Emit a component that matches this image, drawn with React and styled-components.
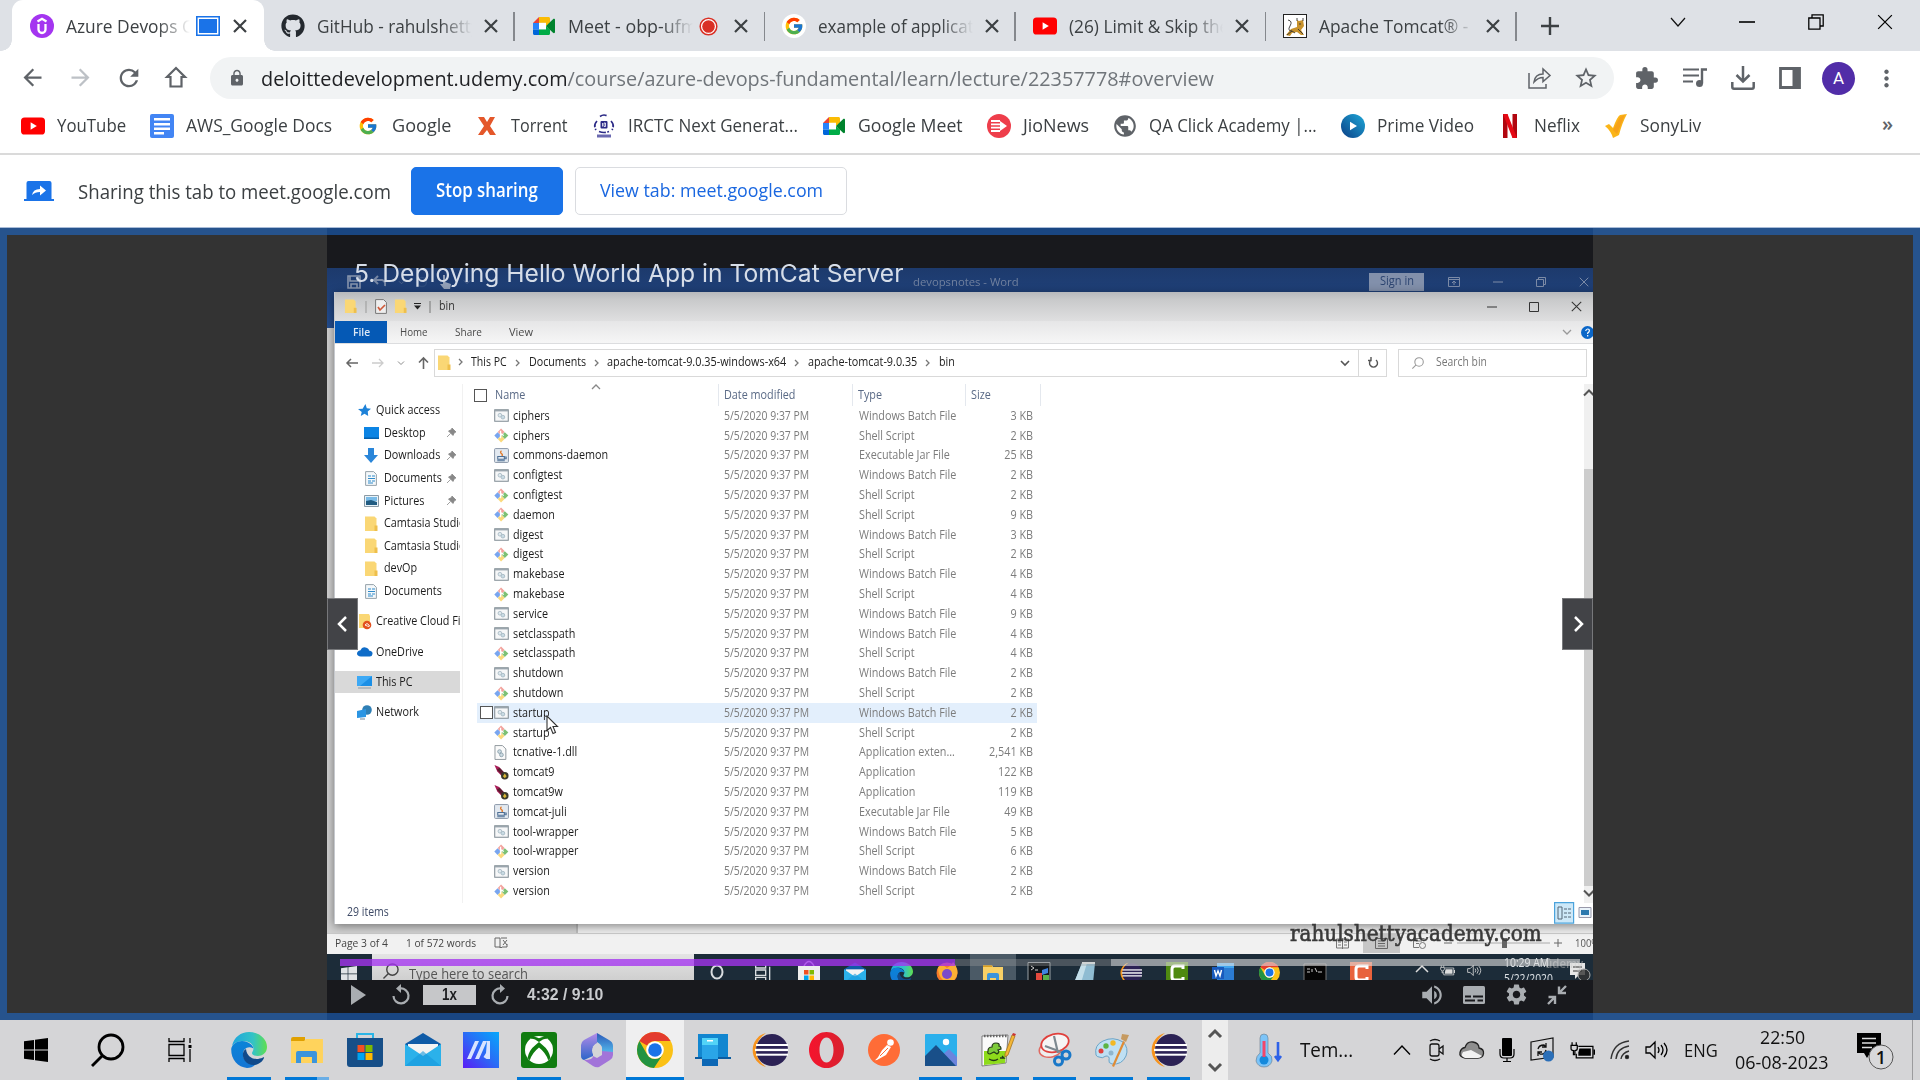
import React, { useLayoutEffect, useRef, useState } from "react";
import styled, { createGlobalStyle, css } from "styled-components";
import { FcGoogle } from "react-icons/fc";
import { FaGithub } from "react-icons/fa";
import {
  MdArrowBack, MdArrowForward, MdRefresh, MdLock, MdStarBorder, MdExtension,
  MdMoreVert, MdVolumeUp, MdSettings, MdPublic,
} from "react-icons/md";

const Global = createGlobalStyle`
  *, *::before, *::after { box-sizing: border-box; }
  html, body { margin: 0; padding: 0; }
  body { width: 1920px; height: 1080px; overflow: hidden; background: #fff; font-family: "Open Sans", "Noto Sans", sans-serif; }
  svg { display: block; flex: none; overflow: visible; }
`;

/* ---------- text that keeps a given measure ---------- */
const FitBox = styled.span`
  display: block;
  flex: none;
  width: ${(p) => (p.$w ? p.$w + "px" : "auto")};
  white-space: nowrap;
  font-size: ${(p) => p.$size}px;
  line-height: 1.36;
  color: ${(p) => p.$color || "#3c4043"};
  font-weight: ${(p) => p.$weight || 400};
  ${(p) => p.$family && css`font-family: ${p.$family};`}
`;
const FitInner = styled.span`
  display: inline-block;
  transform-origin: 0 50%;
`;
const Fit = ({ w, size = 20, color, weight, family, children }) => {
  const ref = useRef(null);
  const [k, setK] = useState(1);
  useLayoutEffect(() => {
    setK(w / ref.current.offsetWidth);
  }, [w]);
  return (
    <FitBox $w={w} $size={size} $color={color} $weight={weight} $family={family}>
      <FitInner ref={ref} style={{ transform: `scaleX(${k})` }}>{children}</FitInner>
    </FitBox>
  );
};
const Narrow = styled.span`
  display: block;
  white-space: nowrap;
  transform: scaleX(${(p) => p.$k || 0.9});
  transform-origin: ${(p) => (p.$right ? "100% 50%" : "0 50%")};
  text-align: ${(p) => (p.$right ? "right" : "left")};
  font-size: ${(p) => p.$size || 12}px;
  line-height: 18px;
  color: ${(p) => p.$color || "#1c1c1c"};
`;

/* ---------- shared drawings ---------- */
const YouTube = ({ s = 24 }) => (
  <svg width={s} height={s} viewBox="0 0 24 24"><rect y="3.5" width="24" height="17" rx="3.6" fill="#f00" /><path d="M9.600 8.300v7.400l6.200-3.700z" fill="#fff" /></svg>
);
const Meet = ({ s = 24 }) => (
  <svg width={s} height={s} viewBox="0 0 24 24">
    <path d="M1 9l6-6v6z" fill="#ea4335" /><path d="M7 3h9.500c.9 0 1.500.6 1.500 1.500V9l-4 3V8.800H7z" fill="#fbbc04" />
    <path d="M1 9h6v6.500H1z" fill="#2684fc" /><path d="M1 15.500h6V21H2.500C1.600 21 1 20.400 1 19.500z" fill="#0066da" />
    <path d="M7 15.300h7V12l4 3.500v4c0 .9-.6 1.500-1.500 1.500H7z" fill="#00ac47" /><path d="M14 12l7-6.800c.8-.7 2-.4 2 .7v12.200c0 1.100-1.200 1.400-2 .7z" fill="#00832d" />
    <path d="M7 9h7v6.300H7z" fill="#fff" />
  </svg>
);
const Folder = ({ s = 14 }) => (
  <svg width={s} height={s * 1.1} viewBox="0 0 14 15.400"><path d="M1 .5h9.500l2 2V15H1z" fill="#fad775" /><path d="M10.500 9.500h3V15h-3z" fill="#eebf4c" /></svg>
);
const EdgeIcon = ({ s = 36 }) => (
  <svg width={s} height={s} viewBox="0 0 36 36">
    <defs>
      <linearGradient id="eg1" x1="0" x2="1"><stop offset="0" stopColor="#1fa5dd" /><stop offset=".6" stopColor="#33c3c6" /><stop offset="1" stopColor="#5fdf4e" /></linearGradient>
      <linearGradient id="eg2" x1="0" y1="0" x2="0" y2="1"><stop offset="0" stopColor="#0a84d8" /><stop offset="1" stopColor="#1475d4" /></linearGradient>
    </defs>
    <path d="M1 14C3 5 10 0 18 0c10 0 18 7 18 15 0 6-5 9-9 9-4 0-6-1.500-6-3 0-1 1.500-2 1.500-4.500C22.500 12 18 9 12 9 7 9 3 11 1 14z" fill="url(#eg1)" />
    <path d="M.2 17C1 12 6 9 11 9c6 0 11 4 11.500 7.500C17 13 12 17 12 22c0 7 6 11 13 10-3 3-6 4-9 4C7 35 0 28 .2 17z" fill="url(#eg2)" />
    <path d="M15 17c-4 2-4 8-1 12 3 4 9 5 13 3 3-1.500 5-3.500 6-6 .3-.8-.3-1-1-.6C24 29 16 26 15 17z" fill="#114a8b" />
  </svg>
);
const ChromeIcon = ({ s = 36 }) => (
  <svg width={s} height={s} viewBox="0 0 36 36">
    <circle cx="18" cy="18" r="18" fill="#fbc116" />
    <path d="M18 0a18 18 0 0 1 15.600 9H18a9 9 0 0 0-8 4.500L2.400 9A18 18 0 0 1 18 0z" fill="#e33b2e" />
    <path d="M2.400 9A18 18 0 0 0 17 36l8.500-13A9 9 0 0 1 10 22.300z" fill="#229342" />
    <circle cx="18" cy="18" r="8.800" fill="#fff" /><circle cx="18" cy="18" r="6.800" fill="#1a73e8" />
  </svg>
);
const Eclipse = ({ s = 36 }) => (
  <svg width={s} height={s} viewBox="0 0 36 36">
    <path d="M14 1A17.500 17.500 0 0 0 14 35C7 30 4 24 4 18S7 6 14 1z" fill="#f7941e" />
    <circle cx="20" cy="18" r="16" fill="#2c2255" />
    <g fill="#fff"><rect x="4" y="12" width="32" height="2" /><rect x="3" y="16.800" width="33" height="2.300" /><rect x="4" y="21.700" width="32" height="2" /></g>
  </svg>
);
const MailIcon = ({ s = 36 }) => (
  <svg width={s} height={s} viewBox="0 0 36 36"><path d="M0 12L18 1l18 11v4H0z" fill="#0f5ba7" /><path d="M3 12h30v12H3z" fill="#f3f3f3" /><path d="M0 12l18 12L36 12v22H0z" fill="#2bb1ea" /><path d="M0 34l18-15 18 15z" fill="#1597dc" opacity=".6" /></svg>
);
const StoreIcon = ({ s = 36 }) => (
  <svg width={s} height={s} viewBox="0 0 36 36">
    <path d="M10 8V2h16v6" fill="none" stroke="#2ab5e6" strokeWidth="2" /><path d="M0 6h36v26a3 3 0 0 1-3 3H3a3 3 0 0 1-3-3z" fill="#174f88" />
    <path d="M10.500 13h7v7h-7z" fill="#f25022" /><path d="M18.500 13h7v7h-7z" fill="#7fba00" /><path d="M10.500 21h7v7h-7z" fill="#00a4ef" /><path d="M18.500 21h7v7h-7z" fill="#ffb900" />
  </svg>
);
const WinLogo = ({ s = 24, color = "#000" }) => (
  <svg width={s} height={s} viewBox="0 0 24 24"><path d="M0 3.200l10-1.300v9.500H0zM11 1.700L24 0v11.400H11zM0 12.500h10v9.600L0 20.800zM11 12.500h13V24l-13-1.700z" fill={color} /></svg>
);
const TaskView = ({ s = 24, color = "#000" }) => (
  <svg width={s} height={s} viewBox="0 0 24 24" fill="none" stroke={color} strokeWidth="1.300"><path d="M1 0v3.500h15V0M1 24v-3.500h15V24M1 6.500h15v11H1zM22 0v5M22 11v13" /><path d="M20.500 7h3v3h-3z" fill={color} stroke="none" /></svg>
);
const Speaker = ({ s = 24, color = "#000" }) => (
  <svg width={s} height={s} viewBox="0 0 24 24" fill="none" stroke={color} strokeWidth="1.300"><path d="M1 9h4l5-5v16l-5-5H1zM13 9q2 3 0 6M16 7q4 5 0 10M19 5q6 7 0 14" /></svg>
);
const Battery = ({ s = 24, color = "#000" }) => (
  <svg width={s} height={s} viewBox="0 0 24 24"><path d="M8 8h14v11H6v-4" fill="none" stroke={color} strokeWidth="1.200" /><path d="M9 10h11v7H8v-3z" fill={color} /><path d="M22.500 11h1.500v5h-1.500z" fill={color} /><path d="M1 7h6v3q0 2-2.300 2V16H3.300v-4Q1 12 1 10zM2 4v3M6 4v3" fill="none" stroke={color} strokeWidth="1.200" /></svg>
);
const CloseX = ({ s = 14, color = "#3c4043", t = 2.200 }) => (
  <svg width={s} height={s} viewBox="0 0 14 14"><path d="M1 1l12 12M13 1L1 13" stroke={color} strokeWidth={t} /></svg>
);

/* ---------- tab strip ---------- */
const TabStrip = styled.header`
  display: flex;
  height: 51px;
  padding-left: 12px;
  background: #dee1e6;
`;
const TabBox = styled.div`
  position: relative;
  display: flex;
  align-items: center;
  width: ${(p) => (p.$active ? 252 : 250.500)}px;
  padding: 1px 17px 0 ${(p) => (p.$active ? 18 : 17)}px;
  gap: 12px;
  ${(p) => p.$active
    ? css`
      background: #fff;
      border-radius: 11px 11px 0 0;
      &::before, &::after { content: ""; position: absolute; bottom: 0; width: 11px; height: 11px; }
      &::before { left: -11px; background: radial-gradient(circle at 0 0, transparent 10.500px, #fff 11px); }
      &::after { right: -11px; background: radial-gradient(circle at 100% 0, transparent 10.500px, #fff 11px); }`
    : css`
      &::after { content: ""; position: absolute; right: 0; top: 12px; width: 1.500px; height: 29px; background: #85888d; }`}
`;
const TabTitle = styled.div`
  flex: 1;
  min-width: 0;
  margin-right: ${(p) => (p.$badge ? -6 : 0)}px;
  padding-top: 2px;
  overflow: hidden;
  mask-image: linear-gradient(90deg, #000 calc(100% - 32px), transparent);
`;
const Badge = styled.span`
  flex: none;
  margin-right: ${(p) => p.$mr}px;
`;
const NewTab = styled.div`
  display: flex;
  align-items: center;
  padding: 1px 0 0 24px;
`;
const WindowKeys = styled.div`
  display: flex;
  align-items: center;
  gap: 53px;
  height: 43px;
  margin-left: auto;
  padding-right: 27px;
`;
const Udemy = () => (
  <svg width="24" height="24" viewBox="0 0 24 24"><circle cx="12" cy="12" r="12" fill="#a435f0" /><path d="M7.500 7.500L12 4.800l4.500 2.700M8.500 10v5.500a3.500 3.500 0 0 0 7 0V10" fill="none" stroke="#fff" strokeWidth="2.300" /></svg>
);
const Tomcat = () => (
  <svg width="24" height="24" viewBox="0 0 24 24"><rect x=".5" y=".5" width="23" height="23" fill="#fff" stroke="#222" /><path d="M3 21l5-6 6-2 0-7 2 1 4-1 1 6-3 4 3 5h-3l-4-3-5 1-2 3z" fill="#c8922c" /><path d="M5 6q5 1 2 6t2 5M14 4v3M20 4v3M16 10h2M4 21l5-4 3 2M15 15l5 5" fill="none" stroke="#333" strokeWidth=".9" /></svg>
);
const GoogleDisc = styled.span`
  display: flex; align-items: center; justify-content: center; flex: none;
  width: 24px; height: 24px; border-radius: 50%; background: #fff;
`;
const tabs = [
  { icon: <Udemy />, title: "Azure Devops Co", w: 137, active: true, mr: 2,
    badge: <svg width="24" height="20" viewBox="0 0 24 20"><path d="M.8.8h22.400v18.400H.8z" fill="#fff" stroke="#1a73e8" strokeWidth="1.600" /><path d="M3 3h18v14H3z" fill="#1a73e8" /></svg> },
  { icon: <FaGithub size={24} color="#24292f" />, title: "GitHub - rahulshetty", w: 163 },
  { icon: <Meet />, title: "Meet - obp-ufmx", w: 139, mr: 5,
    badge: <svg width="19" height="19" viewBox="0 0 19 19"><circle cx="9.500" cy="9.500" r="8.300" fill="#fff" stroke="#d93025" strokeWidth="1.500" /><circle cx="9.500" cy="9.500" r="6.300" fill="#d93025" /></svg> },
  { icon: <GoogleDisc><FcGoogle size={20} /></GoogleDisc>, title: "example of applicati", w: 160 },
  { icon: <YouTube />, title: "(26) Limit & Skip the", w: 160 },
  { icon: <Tomcat />, title: "Apache Tomcat® -", w: 149 },
];

/* ---------- address bar ---------- */
const Toolbar = styled.div`
  display: flex;
  align-items: center;
  height: 54px;
  padding-left: 19px;
`;
const NavKeys = styled.div`
  display: flex;
  gap: 21px;
  width: 191px;
`;
const Omnibox = styled.div`
  display: flex;
  align-items: center;
  width: 1404px;
  height: 42px;
  padding: 0 15px 0 18px;
  border-radius: 21px;
  background: #f1f3f4;
`;
const UrlWrap = styled.div`
  flex: 1;
  padding: 1.500px 0 0 15px;
  span b { font-weight: 400; color: #202124; }
`;
const OmniKeys = styled.div`
  display: flex;
  align-items: center;
  gap: 22px;
`;
const Extras = styled.div`
  display: flex;
  align-items: center;
  gap: 24px;
  padding-left: 20px;
`;
const Avatar = styled.div`
  display: flex; align-items: center; justify-content: center;
  width: 33px; height: 33px; margin-left: -3px; margin-right: -6px;
  border-radius: 50%;
  background: #512da8;
  color: #fff;
  font: 400 17px Roboto, sans-serif;
`;

/* ---------- bookmarks ---------- */
const Bookmarks = styled.nav`
  display: flex;
  align-items: center;
  gap: 24px;
  height: 50px;
  padding: 0 27px 6px 21px;
  border-bottom: 2px solid #dadada;
`;
const Bookmark = styled.div`
  display: flex;
  align-items: center;
  gap: 12px;
`;
const Slot = styled.span`
  display: flex; align-items: center; justify-content: center;
  width: 24px; height: 24px; flex: none;
`;
const More = styled.span`
  margin-left: auto;
  margin-top: -4px;
  font-size: 20px;
  font-weight: 600;
  line-height: 24px;
  color: #5f6368;
`;
const bookmarks = [
  [<YouTube />, "YouTube", 69],
  [<svg width="24" height="24" viewBox="0 0 24 24"><rect width="24" height="24" rx="2" fill="#4285f4" /><path d="M4 4h16v2.500H4zM4 9h16v2.500H4zM4 13.500h16V16H4zM4 18h10v2.500H4z" fill="#fff" /></svg>, "AWS_Google Docs", 146],
  [<FcGoogle size={20} />, "Google", 59],
  [<svg width="18" height="18" viewBox="0 0 18 18"><path d="M0 0h6l3 5 3-5h5l-5 9 6 9h-6l-3-5-4 5H0l6-9z" fill="#e4572a" /></svg>, "Torrent", 57],
  [<svg width="22" height="24" viewBox="0 0 22 24"><path d="M7 2.500q4-3 8 0M4 7q-4 4-1 9M18 7q4 4 1 9M6 17.500q5 2 10 0" fill="none" stroke="#2b2a86" strokeWidth="1.700" strokeDasharray="7 1.500" /><rect x="7.500" y="7" width="7" height="7.500" rx="1" fill="#2b2a86" /><path d="M9.500 9v3.500M11 9h1.500v3.500H11z" fill="none" stroke="#fff" strokeWidth=".8" /><path d="M4 20.500h14v3H4z" fill="#6a69b0" /></svg>, "IRCTC Next Generat...", 170],
  [<Meet />, "Google Meet", 105],
  [<svg width="24" height="24" viewBox="0 0 24 24"><circle cx="12" cy="12" r="12" fill="#ee3e4b" /><path d="M4 7h9M4 10.300h9M4 13.600h9M4 17h9" stroke="#fff" strokeWidth="1.800" /><path d="M13 7l7 5-7 5z" fill="#fff" /></svg>, "JioNews", 66],
  [<MdPublic size={26} color="#5f6368" />, "QA Click Academy |...", 168],
  [<svg width="24" height="24" viewBox="0 0 24 24"><defs><linearGradient id="pv" x1="1" y1="0" x2="0" y2="1"><stop stopColor="#1ea8d8" /><stop offset="1" stopColor="#0b3f86" /></linearGradient></defs><circle cx="12" cy="12" r="12" fill="url(#pv)" /><path d="M9 7.800v8.400l7-4.200z" fill="#fff" /></svg>, "Prime Video", 97],
  [<svg width="14" height="24" viewBox="0 0 14 24"><path d="M0 0h4.500v24H0zM9.500 0H14v24H9.500z" fill="#b1060f" /><path d="M0 0h4.500L14 24H9.500z" fill="#e50914" /></svg>, "Neflix", 46],
  [<svg width="22" height="24" viewBox="0 0 22 24"><path d="M0 12l4-2 4 4Q12 3 15 1l7-1q-5 9-8 21l-6 3q-2-7-8-12z" fill="#fbb518" /><path d="M8 16L15 3l5-2.500L12 20z" fill="#f28f1c" opacity=".5" /></svg>, "SonyLiv", 61],
];

/* ---------- sharing bar ---------- */
const ShareBar = styled.div`
  display: flex;
  align-items: center;
  height: 73px;
  padding: 0 24px 0;
  border-bottom: 1px solid #a9bcd8;
`;
const ShareLabel = styled.div`
  padding: 2px 20px 0 24px;
`;
const ShareButton = styled.button`
  display: flex; align-items: center; justify-content: center;
  width: ${(p) => p.$w}px;
  height: 48px;
  margin-right: 12px;
  padding: 0;
  border-radius: 5px;
  border: 1px solid ${(p) => (p.$primary ? "#1a73e8" : "#dadce0")};
  background: ${(p) => (p.$primary ? "#1a73e8" : "#fff")};
  font-family: inherit;
`;

/* ---------- page ---------- */
const Page = styled.main`
  position: relative;
  display: flex;
  justify-content: center;
  height: 792px;
  background: #333;
  &::after { content: ""; position: absolute; inset: 0; border: 7px solid rgba(26, 115, 232, 0.5); z-index: 5; }
`;
const Player = styled.section`
  position: relative;
  width: 1266px;
  padding: 7px 0;
  background: #18191d;
  overflow: hidden;
`;
const Footage = styled.div`
  position: relative;
  display: flex;
  flex-direction: column;
  height: 745px;
  padding-top: 33px;
  overflow: hidden;
`;
const WordBar = styled.div`
  display: flex;
  align-items: center;
  height: 60px;
  padding: 0 4px 32px 20px;
  background: linear-gradient(#1d3a6c, #1f4078 24px, #234d8f);
`;
const WordTools = styled.div`
  display: flex; align-items: center; gap: 12px; width: 566px;
`;
const WordKeys = styled.div`
  display: flex; align-items: center; gap: 33px; margin-left: auto;
`;
const SignIn = styled.div`
  display: flex; justify-content: center;
  width: 55px; height: 18px; margin-right: -9px;
  background: #8290ab;
`;
const WordCanvas = styled.div`
  flex: 1;
  background: linear-gradient(90deg, #d0d0d0 0 249px, #bbb 249px 251px, #ededed 251px);
  border-bottom: 1px solid #c9c9c9;
`;
const WordStatus = styled.div`
  display: flex;
  align-items: center;
  gap: 18px;
  height: 20px;
  padding: 0 0 2px 8px;
  background: #f1f1f1;
`;
const WordZoom = styled.div`
  display: flex; align-items: center; gap: 18px; margin-left: auto;
  width: 257px;
  overflow: hidden;
`;
const ViewTile = styled.span`
  display: flex; justify-content: center; align-items: center; flex: none;
  width: 37px; height: 19px; margin: 0 -5.500px 0 -4px; background: #c6c6c6;
`;
const Percent = styled.span`
  margin-left: -7px;
`;
const InnerBar = styled.div`
  display: flex;
  align-items: flex-start;
  height: 26px;
  padding-left: 14px;
  background: #1c2c39;
  overflow: hidden;
`;
const InnerSearch = styled.div`
  display: flex;
  align-items: flex-start;
  gap: 10px;
  width: 322px;
  height: 26px;
  padding: 9px 0 0 11px;
  background: linear-gradient(#e4e4e4, #cfcfcf);
`;
const InnerStart = styled.div`
  width: 31px; padding-top: 12px;
`;
const InnerIcon = styled.div`
  display: flex; justify-content: center;
  width: 46px; height: 26px; padding-top: 8px;
  background: ${(p) => (p.$on ? "#4b5a66" : "transparent")};
`;
const InnerTray = styled.div`
  display: flex; gap: 12px; padding: 9px 0 0 32px;
`;
const InnerClock = styled.div`
  width: 64px; padding: 0 0 0 10px; margin-top: -8px;
`;
const Watermark = styled.div`
  position: absolute;
  left: 963px; top: 684px;
  -webkit-text-stroke: 0.600px #3a3a3a;
`;
const FaintBrand = styled.div`
  position: absolute;
  right: 10px; top: 720px;
  opacity: 0.5;
`;

/* explorer window */
const Explorer = styled.div`
  position: absolute;
  left: 7px; top: 57px;
  display: flex;
  flex-direction: column;
  width: 1275px; height: 632px;
  background: #fff;
  border-left: 1px solid #c6c9ce;
  box-shadow: 0 2px 9px rgba(0, 0, 0, 0.45);
`;
const ExpTitle = styled.div`
  display: flex;
  align-items: center;
  gap: 7px;
  height: 29px;
  padding: 0 27px 0 9px;
  background: linear-gradient(#b7b9bc, #c9cacb 8px, #dfdfe0);
`;
const ExpKeys = styled.div`
  display: flex; align-items: center; gap: 32px; margin-left: auto;
`;
const Ribbon = styled.div`
  display: flex;
  align-items: center;
  gap: 27px;
  height: 23px;
  padding-right: 15px;
  background: linear-gradient(#e6e6e7, #f6f6f6);
  border-bottom: 1px solid #dcdddf;
`;
const FileTab = styled.div`
  display: flex; justify-content: center; align-items: center;
  width: 52px; height: 22px; margin-right: -14px;
  background: #0559b5;
`;
const RibbonEnd = styled.div`
  display: flex; align-items: center; gap: 10px; margin-left: auto;
`;
const PathRow = styled.div`
  display: flex;
  align-items: center;
  height: 40px;
  padding: 0 0 3px 11px;
`;
const PathKeys = styled.div`
  display: flex; align-items: center; gap: 14px; width: 88px;
`;
const PathBox = styled.div`
  display: flex; align-items: center;
  width: 953px; height: 28px; padding-left: 2px;
  border: 1px solid #d9d9d9;
`;
const Crumb = styled.div`
  display: flex; align-items: center;
  padding-right: ${(p) => (p.$first ? 6 : 6.700)}px; gap: ${(p) => (p.$first ? 6 : 7)}px;
`;
const PathEnd = styled.div`
  display: flex; align-items: center; height: 26px; margin-left: auto;
`;
const Reload = styled.span`
  display: flex; align-items: center; justify-content: center;
  width: 28px; height: 26px; margin-left: 9px; border-left: 1px solid #d9d9d9;
`;
const SearchBox = styled.div`
  display: flex; align-items: center; gap: 12px;
  width: 189px; height: 28px; margin-left: 11px; padding-left: 13px;
  border: 1px solid #d9d9d9;
`;
const ExpBody = styled.div`
  display: flex;
  height: 519px;
`;
const Tree = styled.div`
  width: 128px;
  padding-top: 15px;
  border-right: 1px solid #f1f1f1;
`;
const TreeItem = styled.div`
  display: flex;
  align-items: center;
  gap: ${(p) => (p.$deep ? 5 : 4)}px;
  width: 125px;
  height: 22.600px;
  margin-top: ${(p) => p.$top || 0}px;
  padding-left: ${(p) => (p.$deep ? 28.500 : 22)}px;
  background: ${(p) => (p.$on ? "#d9d9d9" : "transparent")};
  overflow: hidden;
`;
const TreeIcon = styled.span`
  display: flex; justify-content: center; width: 15px; flex: none;
`;
const TreeName = styled(Narrow)`
  flex: 1;
  width: 0;
`;
const Pin = styled.span`
  flex: none; padding-right: 4px;
`;
const Files = styled.div`
  position: relative;
  flex: 1;
`;
const SortMark = styled.span`
  position: absolute;
  left: 129px; top: -1px;
`;
const FilesHead = styled.div`
  display: grid;
  grid-template-columns: 21px 223px 6px 128px 6px 107px 6px 69px 1px;
  align-items: center;
  height: 22px;
  padding: 0 0 0 11px;
`;
const Rule = styled.i`
  width: 1px; height: 22px; background: #e4e8ee;
`;
const FileRow = styled.div`
  display: grid;
  grid-template-columns: 17px 19px 211px 134.500px 112.500px 62px;
  align-items: center;
  width: 560px;
  height: 19.800px;
  margin-left: 14px;
  background: ${(p) => (p.$on ? "#e3effc" : "transparent")};
`;
const Check = styled.i`
  display: block;
  width: 13px; height: 13px; margin-left: ${(p) => p.$ml || 0}px;
  border: 1.500px solid #555; background: #fff;
`;
const Scroll = styled.div`
  display: flex; flex-direction: column;
  width: 25px; padding-top: 4px;
  background: #f0f0f0;
`;
const Thumb = styled.div`
  height: 417px; margin-top: 71px; margin-bottom: 2px; background: #cdcdcd;
`;
const ExpStatus = styled.div`
  display: flex; align-items: center; justify-content: space-between;
  height: 21px; padding: 0 17px 2px 12px;
`;
const Cursor = styled.span`
  position: absolute;
  left: 219px; top: 480px;
`;

/* player overlay */
const LectureTitle = styled.h1`
  position: absolute;
  left: 27px; top: 29px;
  margin: 0;
`;
const Skip = styled.div`
  position: absolute;
  ${(p) => p.$side}: 0;
  top: 370px;
  display: flex; align-items: center; justify-content: center;
  width: 31px; height: 52px;
  background: #424347;
  border: 1px solid #77787b;
`;
const Progress = styled.div`
  position: absolute;
  left: 13px; top: 731px;
  display: flex;
  width: 1240px; height: 7px;
`;
const Span = styled.i`
  width: ${(p) => p.$w}px; background: ${(p) => p.$c};
`;
const Controls = styled.div`
  display: flex;
  align-items: center;
  height: 33px;
  padding: 0 26px 4px 24px;
`;
const Back5 = styled.span`
  margin-left: 26px;
`;
const Rate = styled.div`
  display: flex; justify-content: center; align-items: center;
  width: 53px; height: 20px; margin: 0 15px 0 13px;
  background: #c6c7c9;
`;
const Elapsed = styled.div`
  margin-left: 18px;
`;
const ControlEnd = styled.div`
  display: flex; align-items: center; gap: 18.500px; margin-left: auto;
`;

/* ---------- task bar ---------- */
const TaskBar = styled.footer`
  display: flex;
  height: 60px;
  background: #d5d5d7;
`;
const StartArea = styled.div`
  display: flex; align-items: center; width: 220px; padding-left: 24px; gap: 43px;
`;
const AppTile = styled.div`
  position: relative;
  display: flex; align-items: center; justify-content: center;
  width: ${(p) => p.$w}px; height: 60px;
  background: ${(p) => (p.$state === "active" ? "#efeff0" : "transparent")};
  ${(p) => p.$state && css`
    &::after {
      content: ""; position: absolute; bottom: 0; height: 3px;
      left: ${p.$state === "active" ? 0 : 7}px; right: ${p.$state === "active" ? 0 : 7}px;
      background: ${p.$state === "multi" ? "linear-gradient(90deg, #0078d7 73%, #6aaee6 73%)" : "#0078d7"};
    }`}
`;
const Scroller = styled.div`
  display: flex; flex-direction: column; align-items: center; justify-content: space-between;
  width: 26px; margin-left: 5px; padding: 8px 0 7px;
  background: #ededed;
`;
const Weather = styled.div`
  display: flex; align-items: center; gap: 19px; width: 165px; padding-left: 28px;
`;
const Tray = styled.div`
  display: flex; align-items: center; gap: 15px;
`;
const Clock = styled.div`
  display: flex; flex-direction: column; align-items: center;
  width: 94px; margin-left: 17px; padding-top: 4px;
`;
const Notice = styled.div`
  display: flex; align-items: center; padding-left: 28px;
`;
const Sliver = styled.i`
  width: 1px; margin-left: 18px; background: #9b9b9d;
`;

const Fold = ({ s = 32 }) => <svg width={s} height={s * 0.810} viewBox="0 0 32 26"><path d="M0 2q0-2 2-2h12v5H0z" fill="#e0a000" /><path d="M0 4h13l2-2h17v24H0z" fill="#ffd35c" /><path d="M5 26V16q0-2 2-2h17q2 0 2 2v10h-5v-6H10v6z" fill="#3b94dc" /></svg>;
const MA = () => <svg width="36" height="36" viewBox="0 0 36 36"><defs><linearGradient id="ma" x1="0" y1="1" x2="1" y2="0"><stop stopColor="#5a1cf5" /><stop offset=".5" stopColor="#2b6bf6" /><stop offset="1" stopColor="#05a8fb" /></linearGradient></defs><path d="M0 0h36v36H0z" fill="url(#ma)" /><path d="M4 27L12 9h4L8 27zM12 27L20 9h4l-8 18zM23 21l1-12h3v18h-3.500l-3-2z" fill="#d8e4ff" /></svg>;
const Xbox = () => <svg width="36" height="36" viewBox="0 0 36 36"><rect width="36" height="36" rx="3" fill="#107c10" /><circle cx="18" cy="18" r="14" fill="#fff" /><path d="M10 6.500q3-.5 8 3 5-3.500 8-3l-1.500-2q-2-1.500-6.500 1-4.500-2.500-6.500-1zM9 28Q10 19 18 13q8 6 9 15l2 2-11-9-11 9zM8 8.500q2 0 5.500 4Q8 19 7 26q-2 0-3-4Q9 15 8 8.500zM28 8.500q-2 0-5.500 4Q28 19 29 26q2 0 3-4-5-7-4-13.500z" fill="#107c10" opacity="0" /><path d="M9.500 6.800Q13 6 18 10q5-4 8.500-3.200L25 5q-3-1-7 1.200Q14 4 11 5zM14.500 13Q8 18 6.500 26l2.300 2.300Q11 21 18 15.500 25 21 27.200 28.300l2.300-2.300Q28 18 21.500 13L18 10z" fill="#107c10" /></svg>;
const M365 = () => <svg width="32" height="36" viewBox="0 0 32 36"><defs><linearGradient id="m3" x1="0" y1="0" x2="0" y2="1"><stop stopColor="#b48be8" /><stop offset="1" stopColor="#2c66c9" /></linearGradient><linearGradient id="m4" x1="0" y1="0" x2="0" y2="1"><stop stopColor="#2b59b8" /><stop offset="1" stopColor="#58c3f0" /></linearGradient></defs><path d="M16 1L3 8Q0 10 0 13v11q0 3 3 4l9-4V16q0-3 4-5z" fill="url(#m3)" /><path d="M16 1l12 7q4 2 4 6v9l-11-3v-4q0-3-5-6z" fill="url(#m4)" /><path d="M32 20v3q0 3-3 5l-11 7q-3 1-6-1L3 28q9 0 9-4l4 2 5-3v-4z" fill="#a274d9" /><ellipse cx="16" cy="18.500" rx="5" ry="6" fill="#d5d5d7" /></svg>;
const Phone = () => <svg width="36" height="34" viewBox="0 0 36 34"><path d="M3 1h30v24H3z" fill="#1286d0" /><path d="M0 24h36v2H0z" fill="#0c5ca0" /><path d="M7 5h16v28H7z" fill="#2aa5e8" /><path d="M7 5h16v7H7z" fill="#53d3f7" /><path d="M7 26h16v7H7z" fill="#0c67b5" /><path d="M12 7h6v1.500h-6z" fill="#fff" /></svg>;
const Opera = () => <svg width="35" height="36" viewBox="0 0 35 36"><defs><linearGradient id="op" x1="0" x2="1"><stop stopColor="#f5142d" /><stop offset="1" stopColor="#d8222f" /></linearGradient></defs><path fillRule="evenodd" d="M17.500 0a17.500 18 0 1 0 .01 0zM17.500 5.500c4.500 0 7 6 7 12.500s-2.500 12.500-7 12.500-7-6-7-12.500 2.500-12.500 7-12.500z" fill="url(#op)" /></svg>;
const Postman = () => <svg width="32" height="32" viewBox="0 0 32 32"><circle cx="16" cy="16" r="16" fill="#ff6c37" /><circle cx="22.500" cy="8.500" r="3.300" fill="#fff" /><path d="M19 11l4 2-5 8-9 5-2 .3 3-3 4-7z" fill="#fff" /><path d="M12 22l8-8" stroke="#ff6c37" strokeWidth="1" /></svg>;
const Photos = ({ s = 32 }) => <svg width={s} height={s} viewBox="0 0 32 32"><rect width="32" height="32" rx="1" fill="#2bb0ec" /><path d="M16 22l8-7 8 8v9H16z" fill="#6b84dd" /><path d="M0 22L11 11l20 21H0z" fill="#194f89" /><circle cx="21" cy="8" r="3.200" fill="#fff" /></svg>;
const Npp = () => <svg width="34" height="34" viewBox="0 0 34 34"><path d="M1 3l26-1-2 28-24 3z" fill="#fafafa" stroke="#666" strokeWidth=".8" /><path d="M3 18h22l-1 12-21 2z" fill="#8edb1b" /><path d="M3 3h23" stroke="#666" strokeWidth="2.500" strokeDasharray="1.500 1.500" /><path d="M7 18q0-4 4-4 0-4 4-4t3 3q2 0 2 3l-3 1q2 2-1 4l-3-2-4 2q-3 0-2-3z" fill="#7ecb3a" stroke="#24391a" strokeWidth="1.200" /><path d="M8 26q5 3 9 0M19 25h4l-2-2" fill="none" stroke="#24391a" strokeWidth="1.300" /><path d="M24 21L31 2l3 1-7 19-3 2z" fill="#f3b637" stroke="#9c6b15" strokeWidth=".7" /><path d="M31 2l1-2 3 1-1 2z" fill="#c33" /></svg>;
const Snip = () => <svg width="34" height="34" viewBox="0 0 34 34"><ellipse cx="13" cy="16" rx="12" ry="8" transform="rotate(-15 13 16)" fill="#eee" stroke="#e06a62" strokeWidth="1.500" /><ellipse cx="17" cy="10" rx="14" ry="9" transform="rotate(-15 17 10)" fill="#f6f4f4" stroke="#e0403c" strokeWidth="1.800" /><path d="M16 3l4 17M7 13l19 7" stroke="#7d8890" strokeWidth="2.200" /><circle cx="28" cy="22" r="4" fill="none" stroke="#1a78c8" strokeWidth="3" /><circle cx="20.500" cy="28" r="4" fill="none" stroke="#1a78c8" strokeWidth="3" /></svg>;
const Paint = () => <svg width="34" height="34" viewBox="0 0 34 34"><path d="M1 22Q-1 12 8 8q10-5 20 1 6 6 3 14-4 9-14 8-4-1-3-4 1-4-3-4-4 3-7 1-2 0-3-2z" fill="#bfe0f3" stroke="#6ba4c7" /><circle cx="6" cy="18" r="2.500" fill="#e0413b" /><circle cx="11" cy="13" r="2.700" fill="#5bb443" /><circle cx="18" cy="10" r="2.700" fill="#f3b824" /><circle cx="16" cy="20" r="2.500" fill="#8fb6cd" /><path d="M17 33L28 8l2 1-11 25z" fill="#e08b35" /><path d="M26 6l1-5 7 1-3 7z" fill="#c69a60" /></svg>;
const apps = [
  [<EdgeIcon />, 58, "on"], [<Fold />, 58, "multi"], [<StoreIcon />, 58], [<MailIcon />, 58], [<MA />, 58], [<Xbox />, 58, "on"], [<M365 />, 58],
  [<ChromeIcon />, 58, "active"], [<Phone />, 57], [<Eclipse />, 57], [<Opera />, 57], [<Postman />, 57],
  [<Photos />, 57, "on"], [<Npp />, 57, "on"], [<Snip />, 57, "on"], [<Paint />, 57, "on"], [<Eclipse />, 57, "on"],
];

/* ---------- explorer drawings ---------- */
const fileIcons = {
  bat: <svg width="15" height="13" viewBox="0 0 16 14"><path d="M.7.7h14.600v12.600H.7z" fill="#f6f7f8" stroke="#7f8b93" strokeWidth="1.100" /><path d="M1 1h14v1.600H1z" fill="#9aa5ad" /><circle cx="6.300" cy="6.700" r="2" fill="#dfe9ee" stroke="#9fb2bd" strokeWidth=".8" /><circle cx="9.500" cy="8.800" r="2" fill="#c9dbe4" stroke="#9fb2bd" strokeWidth=".8" /></svg>,
  sh: <svg width="15" height="15" viewBox="0 0 16 16"><path d="M7.500.5l3.800 3.700-3.800 3.600-3.500-3.600z" fill="#f2a29c" /><path d="M3.800 4.400l3.700 3.600-3.700 3.700L.3 8z" fill="#78a5ef" /><path d="M11.500 4.400L15.300 8l-3.800 3.700L8 8z" fill="#7cc174" /><path d="M7.500 8l3.800 3.800-3.800 3.700L4 11.800z" fill="#fad97c" /><path d="M7 3v8M7 6l3.500 2" stroke="#fff" strokeWidth="1.400" /></svg>,
  jar: <svg width="15" height="15" viewBox="0 0 16 16"><rect x=".6" y=".6" width="14.800" height="14.800" rx="1" fill="#e3e9f0" stroke="#8593a5" /><path d="M8 3q-2 1.500 0 3t0 3" fill="none" stroke="#e07b2d" strokeWidth="1.400" /><path d="M4 9h7v3H4zM11 9.500h2v2h-2M3.500 13.500h8" fill="none" stroke="#4d6f95" strokeWidth="1.100" /></svg>,
  dll: <svg width="13" height="15" viewBox="0 0 13 16"><path d="M.6.6h8l3.600 3.600v11.200H.6z" fill="#fafafa" stroke="#8d959b" /><circle cx="5.500" cy="7" r="2" fill="#cddbe2" stroke="#7f95a3" strokeWidth=".8" /><circle cx="7.500" cy="10.500" r="2" fill="#cddbe2" stroke="#7f95a3" strokeWidth=".8" /></svg>,
  exe: <svg width="15" height="15" viewBox="0 0 16 16"><path d="M.5 0l5 2 7 8-3 3-6-6z" fill="#a81d58" /><path d="M3 5l5 5 3-2-5-5z" fill="#5a1c2e" /><circle cx="11.500" cy="11.500" r="4" fill="#3b3a2a" /><path d="M9.500 12l2-3 2 3-2 2z" fill="#d9b638" /></svg>,
};
const B = "Windows Batch File", S = "Shell Script", J = "Executable Jar File", A = "Application";
const files = [
  ["ciphers", "bat", B, "3"], ["ciphers", "sh", S, "2"], ["commons-daemon", "jar", J, "25"], ["configtest", "bat", B, "2"], ["configtest", "sh", S, "2"],
  ["daemon", "sh", S, "9"], ["digest", "bat", B, "3"], ["digest", "sh", S, "2"], ["makebase", "bat", B, "4"], ["makebase", "sh", S, "4"],
  ["service", "bat", B, "9"], ["setclasspath", "bat", B, "4"], ["setclasspath", "sh", S, "4"], ["shutdown", "bat", B, "2"], ["shutdown", "sh", S, "2"],
  ["startup", "bat", B, "2", true], ["startup", "sh", S, "2"], ["tcnative-1.dll", "dll", "Application exten...", "2,541"], ["tomcat9", "exe", A, "122"],
  ["tomcat9w", "exe", A, "119"], ["tomcat-juli", "jar", J, "49"], ["tool-wrapper", "bat", B, "5"], ["tool-wrapper", "sh", S, "6"], ["version", "bat", B, "2"], ["version", "sh", S, "2"],
];
const Monitor = () => <svg width="15" height="14" viewBox="0 0 15 14"><path d="M0 1h15v10H0z" fill="#1b8fe6" /><path d="M0 1h15L3 11H0z" fill="#3da9f5" /><path d="M1 13h13" stroke="#8a9aa5" /></svg>;
const DocIcon = () => <svg width="12" height="15" viewBox="0 0 12 15"><path d="M.6.6h8l2.800 2.800v11H.6z" fill="#f4f8fa" stroke="#96a3ab" /><path d="M3 5h3M7 5h3M3 7.500h7M3 10h3M7 10h3M3 12h5" stroke="#2f8ac9" strokeWidth="1.200" /></svg>;
const tree = [
  [<svg width="13" height="13" viewBox="0 0 14 14"><path d="M8 0l1.500 4.500L14 5l-3.500 3 .5 5-4-2.500L3 13l1-4.500L0 5.500 5 5z" fill="#1d82d8" /></svg>, "Quick access"],
  [<svg width="15" height="12" viewBox="0 0 15 12"><path d="M0 0h15v12H0z" fill="#0c84e4" /><path d="M0 10.500h15V12H0z" fill="#0560ad" /></svg>, "Desktop", 1, 1],
  [<svg width="14" height="15" viewBox="0 0 14 15"><path d="M4 0h6v7h4l-7 8-7-8h4z" fill="#2a86d9" /></svg>, "Downloads", 1, 1],
  [<DocIcon />, "Documents", 1, 1],
  [<svg width="15" height="12" viewBox="0 0 15 12"><path d="M.5.5h14v11H.5z" fill="#e9f3f9" stroke="#8b9aa5" /><path d="M2 2h11v4H2z" fill="#7bbce8" /><path d="M2 6l5-1 6 2v3H2z" fill="#225c82" /></svg>, "Pictures", 1, 1],
  [<Folder />, "Camtasia Studio", 1], [<Folder />, "Camtasia Studio", 1], [<Folder />, "devOp", 1], [<DocIcon />, "Documents", 1],
  [<svg width="14" height="15" viewBox="0 0 14 15"><path d="M1 0h10l1 2v12H1z" fill="#fad775" /><circle cx="9" cy="11" r="4.300" fill="#e2501f" /><path d="M7 11q2-3 4 0t-4 0z" fill="none" stroke="#fff" strokeWidth=".9" /></svg>, "Creative Cloud Files", 0, 0, 7.700],
  [<svg width="16" height="11" viewBox="0 0 16 11"><path d="M4 10.500Q0 10 0 7.500T3.500 4.200Q5 .5 8.500 1.500T12 4.500Q16 5 15.500 8t-3.500 2.500z" fill="#0f6cc8" /></svg>, "OneDrive", 0, 0, 7.700],
  [<Monitor />, "This PC", 0, 0, 7.700, true],
  [<svg width="15" height="15" viewBox="0 0 15 15"><circle cx="10" cy="5" r="4.800" fill="#2f7fb5" /><path d="M0 6l9-2v8l-9 1z" fill="#2b95e3" /><path d="M3 14h5" stroke="#789" /></svg>, "Network", 0, 0, 7.700],
];
const Chev = ({ d = "M2 1l3 3-3 3", c = "#777", s = 8, t = 1.300 }) => <svg width={s} height={s} viewBox="0 0 8 8"><path d={d} fill="none" stroke={c} strokeWidth={t} /></svg>;
const DOWN = "M0 2l4 4 4-4", UP = "M0 6l4-4 4 4";
const Mag = ({ s, c, t }) => <svg width={s} height={s} viewBox="0 0 34 34" fill="none" stroke={c} strokeWidth={t}><circle cx="20" cy="14" r="12" /><path d="M11.500 22.500L1 33" /></svg>;
const WinMin = ({ s = 10, c = "#333" }) => <svg width={s} height={s} viewBox="0 0 10 10"><path d="M0 5h10" stroke={c} strokeWidth="1" /></svg>;
const Restore = ({ s = 10, c = "#333", t = 1 }) => <svg width={s} height={s} viewBox="0 0 10 10"><path d="M.5 2.500h7v7h-7zM2.500 2.500v-2h7v7h-2" fill="none" stroke={c} strokeWidth={t} /></svg>;
const Camtasia = ({ c }) => <svg width="22" height="22" viewBox="0 0 22 22"><path d="M0 0h22v22H0z" fill={c} /><path d="M17 7V4H9Q6 4 6 7v8q0 3 3 3h8v-3" fill="none" stroke="#fff" strokeWidth="3" /></svg>;
const innerApps = [
  <svg width="14" height="18" viewBox="0 0 14 18"><ellipse cx="7" cy="10" rx="5.500" ry="6.500" fill="none" stroke="#d9dde0" strokeWidth="2" /></svg>,
  <svg width="16" height="20" viewBox="0 0 24 24" fill="none" stroke="#d9dde0" strokeWidth="2"><path d="M1 2v4h15V2M1 9h15v8H1zM1 24v-4h15v4M22 4v20" /></svg>,
  <svg width="22" height="22" viewBox="0 0 22 22"><path d="M6 4Q11-5 16 4" fill="none" stroke="#ddd" strokeWidth="1.500" /><path d="M0 4h22v18H0z" fill="#eee" /><path d="M6 8h4.500v4.500H6z" fill="#f25022" /><path d="M11.500 8H16v4.500h-4.500z" fill="#7fba00" /><path d="M6 13.500h4.500V18H6z" fill="#00a4ef" /><path d="M11.500 13.500H16V18h-4.500z" fill="#ffb900" /></svg>,
  <MailIcon s={22} />, <EdgeIcon s={23} />,
  <svg width="22" height="22" viewBox="0 0 22 22"><circle cx="11" cy="11" r="10.500" fill="#f5792a" /><path d="M2 5q5-3 9 1 5-3 6-6 6 7 4 13-2 6-8 8Q2 18 2 5z" fill="#fbb034" /><circle cx="11" cy="12" r="5" fill="#7a4bc9" /></svg>,
  <svg width="20" height="20" viewBox="0 0 20 20"><path d="M0 3h9l1 2h10v15H0z" fill="#f8d066" /><path d="M0 3h9v2H0z" fill="#dba021" /><path d="M4 20v-7q0-2 2-2h8q2 0 2 2v7z" fill="#3b94dc" /><path d="M7 20v-4h6v4z" fill="#f8d066" /></svg>,
  <svg width="22" height="20" viewBox="0 0 22 20"><path d="M0 .5h22v19H0z" fill="#10161b" stroke="#9aa2a8" /><path d="M3 4l3 2-3 2M7 8h3" fill="none" stroke="#ccc" /><path d="M8 11h6v7H8z" fill="#e0483c" /><path d="M14 8l6-2v5l-6 2z" fill="#3f83e0" /><path d="M15 13h6v6h-6z" fill="#58b04b" /></svg>,
  <svg width="22" height="22" viewBox="0 0 22 22"><path d="M8 1h13l-2 20H0z" fill="#8fbcd2" /><path d="M8 1l5 0-6 20H0z" fill="#c4dfea" /><path d="M8 1h13" stroke="#e9eef0" strokeWidth="2" /></svg>,
  <Eclipse s={22} />, <Camtasia c="#4f8a10" />,
  <svg width="22" height="22" viewBox="0 0 22 22"><path d="M5 1h17v20H5z" fill="#2b7cd3" /><path d="M5 1h17v5H5z" fill="#41a5ee" /><path d="M0 5h12v12H0z" fill="#185abd" /><path d="M2.500 8l1.500 6 2-5 2 5 1.500-6" fill="none" stroke="#fff" strokeWidth="1.400" /></svg>,
  <ChromeIcon s={21} />,
  <svg width="22" height="20" viewBox="0 0 22 20"><path d="M0 2h22v18H0z" fill="#050505" stroke="#777" /><path d="M3 7h3M3 10h3M8 7v3M11 6l2 4M14 10h4" stroke="#ccc" /></svg>,
  <Camtasia c="#e8623c" />,
];

export default function App() {
  return (
    <>
      <Global />
      <TabStrip>
        {tabs.map((t, i) => (
          <TabBox key={i} $active={t.active}>
            {t.icon}
            <TabTitle $badge={!!t.badge}><Fit w={t.w} size={19}>{t.title}</Fit></TabTitle>
            {t.badge ? <Badge $mr={t.mr - 1}>{t.badge}</Badge> : null}
            <CloseX />
          </TabBox>
        ))}
        <NewTab><svg width="18" height="18" viewBox="0 0 18 18"><path d="M9 0v18M0 9h18" stroke="#3c4043" strokeWidth="2.400" /></svg></NewTab>
        <WindowKeys>
          <svg width="16" height="10" viewBox="0 0 16 10"><path d="M1 1l7 8 7-8" fill="none" stroke="#111" strokeWidth="1.200" /></svg>
          <WinMin s={16} c="#000" /><Restore s={16} c="#000" t={0.800} /><CloseX s={16} color="#000" t={1.100} />
        </WindowKeys>
      </TabStrip>

      <Toolbar>
        <NavKeys>
          <MdArrowBack size={27} color="#5f6368" /><MdArrowForward size={27} color="#bdc1c6" /><MdRefresh size={28} color="#5f6368" />
          <svg width="24" height="27" viewBox="0 0 24 27"><path d="M6.500 22.500V13H3L12 4l9 9h-3.500v9.500z" fill="none" stroke="#5f6368" strokeWidth="2.200" /></svg>
        </NavKeys>
        <Omnibox>
          <MdLock size={18} color="#5f6368" />
          <UrlWrap><Fit w={953} size={20.500} color="#70757a"><b>deloittedevelopment.udemy.com</b>/course/azure-devops-fundamental/learn/lecture/22357778#overview</Fit></UrlWrap>
          <OmniKeys>
            <svg width="23" height="22" viewBox="0 0 23 22"><path d="M1 6v15h17v-4M6 15q1-8 9-8V2l7 6.500-7 6v-4q-5 0-9 4.500z" fill="none" stroke="#5f6368" strokeWidth="1.500" /></svg>
            <MdStarBorder size={26} color="#5f6368" />
          </OmniKeys>
        </Omnibox>
        <Extras>
          <MdExtension size={25} color="#5f6368" />
          <svg width="24" height="20" viewBox="0 0 24 20"><path d="M0 1.500h16M0 7.500h16M0 13.500h10" stroke="#5f6368" strokeWidth="2.200" /><path d="M19 15.500V1.500h5" fill="none" stroke="#5f6368" strokeWidth="2.400" /><circle cx="16.500" cy="15.500" r="3.500" fill="#5f6368" /></svg>
          <svg width="24" height="24" viewBox="0 0 24 24"><path d="M12 0v15M5.500 9l6.500 6.500L18.500 9M1.300 16v5q0 1.700 1.700 1.700h18q1.700 0 1.700-1.700v-5" fill="none" stroke="#5f6368" strokeWidth="2.500" /></svg>
          <svg width="22" height="22" viewBox="0 0 22 22"><path d="M1.500 1.500h19v19h-19z" fill="none" stroke="#5f6368" strokeWidth="2.800" /><path d="M13.500 1H21v20h-7.500z" fill="#5f6368" /></svg>
          <Avatar>A</Avatar>
          <MdMoreVert size={27} color="#5f6368" />
        </Extras>
      </Toolbar>

      <Bookmarks>
        {bookmarks.map(([icon, label, w]) => (
          <Bookmark key={label}><Slot>{icon}</Slot><Fit w={w} size={19}>{label}</Fit></Bookmark>
        ))}
        <More>»</More>
      </Bookmarks>

      <ShareBar>
        <svg width="30" height="20" viewBox="0 0 30 20"><path d="M2.500 2q0-2 2-2h21q2 0 2 2v16H30v2H0v-2h2.500z" fill="#1a73e8" /><path d="M8 14q1-6 8-6V4.500l6 5-6 5V11q-5 0-8 3z" fill="#fff" /></svg>
        <ShareLabel><Fit w={313} size={20}>Sharing this tab to meet.google.com</Fit></ShareLabel>
        <ShareButton $w={152} $primary><Fit w={102} size={19} weight={600} color="#fff">Stop sharing</Fit></ShareButton>
        <ShareButton $w={272}><Fit w={223} size={19} weight={500} color="#1a67e0">View tab: meet.google.com</Fit></ShareButton>
      </ShareBar>

      <Page>
        <Player>
          <Footage>
            <WordBar>
              <WordTools>
                <svg width="14" height="14" viewBox="0 0 14 14" fill="none" stroke="#8895ad" strokeWidth="1.600"><path d="M1 1h12v12H1zM3 1v5h8V1M4 13V9h6v4" /></svg>
                <svg width="14" height="14" viewBox="0 0 14 14" fill="none" stroke="#7888a5" strokeWidth="2"><path d="M5 1L1 5l4 4M1 5h8q4 1 3 6" /></svg>
                <Chev d={DOWN} c="#53678e" s={5} />
                <svg width="12" height="12" viewBox="0 0 12 12"><circle cx="6" cy="6" r="4.500" fill="none" stroke="#2e4c7d" strokeWidth="1.500" /></svg>
                <svg width="12" height="14" viewBox="0 0 12 14"><path d="M3 0h2v7l6 2-1 5H4L0 9h3z" fill="#93a0b7" /></svg>
                <Chev d={DOWN} c="#53678e" s={6} />
              </WordTools>
              <Fit w={106} size={11.500} color="#71819f">devopsnotes - Word</Fit>
              <WordKeys>
                <SignIn><Fit w={34} size={12} color="#2c4470">Sign in</Fit></SignIn>
                <svg width="12" height="10" viewBox="0 0 12 10" fill="none" stroke="#7c8ba7"><path d="M.5.500h11v9H.5zM.5 2.500h11M6 8V4M4 6l2-2 2 2" /></svg>
                <WinMin c="#7c8ba7" /><Restore c="#7c8ba7" /><CloseX s={10} color="#7c8ba7" t={1.400} />
              </WordKeys>
            </WordBar>
            <WordCanvas />
            <WordStatus>
              <Fit w={53} size={11.500} color="#444">Page 3 of 4</Fit>
              <Fit w={70} size={11.500} color="#444">1 of 572 words</Fit>
              <svg width="14" height="12" viewBox="0 0 14 12" fill="none" stroke="#666"><path d="M6 11V1H1v9h5l1 1 1-1h5V7M7 1h6M9 3l4 5M13 3L9 8" /></svg>
              <WordZoom>
                <svg width="13" height="11" viewBox="0 0 13 11" fill="none" stroke="#777"><path d="M.5 1h12v9H.5zM6.500 0v11M2 4h3M2 7h3M8 4h3M8 7h3" /></svg>
                <ViewTile><svg width="13" height="11" viewBox="0 0 13 11" fill="none" stroke="#666"><path d="M.5.500h12v10H.5zM3 3h7M3 5.500h7M3 8h7" /></svg></ViewTile>
                <svg width="13" height="11" viewBox="0 0 13 11" fill="none" stroke="#777"><path d="M.5.500h11M.5.500v9H6M3 3h6M3 5.500h3" /><circle cx="9.500" cy="7.500" r="3" /></svg>
                <svg width="120" height="12" viewBox="0 0 120 12"><path d="M0 6h8M110 6h8M114 2v8" stroke="#666" /><path d="M13 6h93" stroke="#aaa" /><path d="M58 1h5v10h-5z" fill="#666" /></svg>
                <Percent><Fit w={24} size={11.500} color="#555">100%</Fit></Percent>
              </WordZoom>
            </WordStatus>
            <InnerBar>
              <InnerStart><WinLogo s={16} color="#dfe3e6" /></InnerStart>
              <InnerSearch><Mag s={16} c="#444" t={3} /><Fit w={119} size={15} color="#555">Type here to search</Fit></InnerSearch>
              {innerApps.map((ic, i) => <InnerIcon key={i} $on={i === 6}>{ic}</InnerIcon>)}
              <InnerTray>
                <Chev d={UP} c="#ddd" s={12} t={1} /><Battery s={15} color="#ddd" /><Speaker s={15} color="#ddd" />
                <InnerClock><Fit w={45} size={12} color="#dde2e6">10:29 AM</Fit><Fit w={49} size={12} color="#dde2e6">5/22/2020</Fit></InnerClock>
                <svg width="20" height="18" viewBox="0 0 20 18"><path d="M0 0h15v12H9l-4 4v-4H0z" fill="#e6e6e6" /><path d="M3 4h9M3 8h9" stroke="#333" /><circle cx="14" cy="12" r="6" fill="#333c" stroke="#aaa" /></svg>
              </InnerTray>
            </InnerBar>

            <Explorer>
              <ExpTitle>
                <Folder s={13} /><Chev d="M4 -8v24" c="#999" s={4} t={2} />
                <svg width="12" height="15" viewBox="0 0 12 15"><path d="M.6.6h8l2.800 2.800v11H.6z" fill="#eee" stroke="#777" /><path d="M3 8l2 3 5-5" fill="none" stroke="#cf5a3a" strokeWidth="1.700" /></svg>
                <Folder s={13} />
                <svg width="7" height="7" viewBox="0 0 7 7"><path d="M0 .5h7" stroke="#222" /><path d="M0 2.500h7l-3.500 4z" fill="#222" /></svg>
                <Chev d="M4 -8v24" c="#777" s={4} t={2} />
                <Fit w={16} size={12} color="#333">bin</Fit>
                <ExpKeys>
                  <WinMin /><svg width="10" height="10" viewBox="0 0 10 10"><path d="M.5.500h9v9h-9z" fill="none" stroke="#333" /></svg><CloseX s={11} color="#333" t={1.300} />
                </ExpKeys>
              </ExpTitle>
              <Ribbon>
                <FileTab><Fit w={17} size={11.500} weight={600} color="#dbe8f6">File</Fit></FileTab>
                <Fit w={28} size={11.500} color="#4a4a4a">Home</Fit><Fit w={27} size={11.500} color="#4a4a4a">Share</Fit><Fit w={24} size={11.500} color="#4a4a4a">View</Fit>
                <RibbonEnd>
                  <Chev d={DOWN} c="#999" />
                  <svg width="13" height="13" viewBox="0 0 13 13"><circle cx="6.500" cy="6.500" r="6.500" fill="#0a66c8" /><path d="M4.700 5q.3-2 2-2t1.700 1.500T6.700 7v1M6.700 9v1.500" fill="none" stroke="#fff" strokeWidth="1.200" /></svg>
                </RibbonEnd>
              </Ribbon>
              <PathRow>
                <PathKeys>
                  <svg width="12" height="10" viewBox="0 0 12 10" fill="none" stroke="#666" strokeWidth="1.500"><path d="M5 1L1 5l4 4M1 5h11" /></svg>
                  <svg width="12" height="10" viewBox="0 0 12 10" fill="none" stroke="#ccc" strokeWidth="1.300"><path d="M7 1l4 4-4 4M11 5H0" /></svg>
                  <Chev d={DOWN} c="#888" s={6} />
                  <svg width="11" height="12" viewBox="0 0 11 12" fill="none" stroke="#666" strokeWidth="1.600"><path d="M1 5.500l4.500-4.500L10 5.500M5.500 1v11" /></svg>
                </PathKeys>
                <PathBox>
                  <Crumb $first><Folder s={14} /><Chev /></Crumb>
                  {[["This PC", 36], ["Documents", 57], ["apache-tomcat-9.0.35-windows-x64", 179], ["apache-tomcat-9.0.35", 109]].map(([t, w]) => (
                    <Crumb key={t}><Fit w={w} size={12} color="#222">{t}</Fit><Chev /></Crumb>
                  ))}
                  <Fit w={16} size={12} color="#222">bin</Fit>
                  <PathEnd>
                    <Chev d={DOWN} c="#555" t={1.600} />
                    <Reload><svg width="10" height="11" viewBox="0 0 10 11" fill="none" stroke="#555" strokeWidth="1.400"><path d="M8 3a4 4 0 1 1-5 0M3 0v3.500H0" /></svg></Reload>
                  </PathEnd>
                </PathBox>
                <SearchBox><Mag s={12} c="#999" t={3} /><Fit w={51} size={12} color="#777">Search bin</Fit></SearchBox>
              </PathRow>
              <ExpBody>
                <Tree>
                  {tree.map(([ic, label, deep, pin, top, on], i) => (
                    <TreeItem key={i} $deep={deep} $top={top} $on={on}>
                      <TreeIcon>{ic}</TreeIcon><TreeName>{label}</TreeName>
                      {pin ? <Pin><svg width="9" height="9" viewBox="0 0 9 9"><path d="M5 0l4 4-1.500.5L6 7.500 1.500 3l3-1.500zM3.500 5.500L0 9" fill="#888" stroke="#888" strokeWidth=".8" /></svg></Pin> : null}
                    </TreeItem>
                  ))}
                </Tree>
                <Files>
                  <SortMark><Chev d={UP} c="#888" /></SortMark>
                  <FilesHead>
                    <Check /><Narrow $color="#5a6a86">Name</Narrow><Rule />
                    <Narrow $color="#5a6a86">Date modified</Narrow><Rule /><Narrow $color="#5a6a86">Type</Narrow><Rule /><Narrow $color="#5a6a86">Size</Narrow><Rule />
                  </FilesHead>
                  {files.map(([n, ic, type, kb, on], i) => (
                    <FileRow key={i} $on={on}>
                      <span>{on ? <Check $ml={3} /> : null}</span>
                      {fileIcons[ic]}
                      <Narrow>{n}</Narrow><Narrow $k={0.870} $color="#7c7c7c">5/5/2020 9:37 PM</Narrow>
                      <Narrow $color="#7c7c7c">{type}</Narrow><Narrow $right $color="#7c7c7c">{kb} KB</Narrow>
                    </FileRow>
                  ))}
                </Files>
                <Scroll><Chev d={UP} c="#555" s={10} t={1.600} /><Thumb /><Chev d={DOWN} c="#555" s={10} t={1.600} /></Scroll>
              </ExpBody>
              <ExpStatus>
                <Fit w={42} size={12} color="#3e4a66">29 items</Fit>
                <svg width="38" height="22" viewBox="0 0 38 22"><path d="M.6.600h19v20.500H.6z" fill="#cde8f8" stroke="#4ba3dc" strokeWidth="1.200" /><path d="M4 5h4v12H4zM10 7h3M14 7h3M10 11h3M14 11h3M10 15h3M14 15h3" fill="none" stroke="#567" /><path d="M25 5.500h12v10H25z" fill="#eaf3fa" stroke="#99a" /><path d="M27 8h8v5h-8z" fill="#2c79ae" /></svg>
              </ExpStatus>
            </Explorer>
            <Watermark><Fit w={252} size={21.500} color="#3a3a3a" family={'"DejaVu Serif", serif'}>rahulshettyacademy.com</Fit></Watermark>
            <FaintBrand><Fit w={38} size={13} weight={600} color="#bbb">ûdemy</Fit></FaintBrand>
            <Cursor><svg width="13" height="20" viewBox="0 0 13 20"><path d="M1 1v14.500l3.500-3 2.500 6 2.500-1-2.500-6h4.500z" fill="#fff" stroke="#333" strokeWidth="1.100" /></svg></Cursor>
          </Footage>

          <Controls>
            <svg width="15" height="20" viewBox="0 0 15 20"><path d="M0 0l15 10L0 20z" fill="#a9adb1" /></svg>
            <Back5><svg width="18" height="20" viewBox="0 0 18 20"><path d="M8 3.500A7.500 7.500 0 1 1 1.500 11" fill="none" stroke="#a9adb1" strokeWidth="2.200" /><path d="M9-1v9L4 3.500z" fill="#a9adb1" /></svg></Back5>
            <Rate><Fit w={15} size={16} weight={700} color="#1c1d1f" family={'"Liberation Sans", sans-serif'}>1x</Fit></Rate>
            <svg width="18" height="20" viewBox="0 0 18 20"><path d="M10 3.500A7.500 7.500 0 1 0 16.500 11" fill="none" stroke="#a9adb1" strokeWidth="2.200" /><path d="M9-1v9l5-4.500z" fill="#a9adb1" /></svg>
            <Elapsed><Fit w={76} size={16} weight={700} color="#c9cbce" family={'"Liberation Sans", sans-serif'}>4:32 / 9:10</Fit></Elapsed>
            <ControlEnd>
              <MdVolumeUp size={26} color="#a9adb1" />
              <svg width="22" height="18" viewBox="0 0 22 18"><rect width="22" height="18" rx="1.500" fill="#a9adb1" /><path d="M2 10.500h6M10 10.500h10M2 14.500h10M14.500 14.500H20" stroke="#18191d" strokeWidth="1.800" /></svg>
              <MdSettings size={25} color="#a9adb1" />
              <svg width="20" height="20" viewBox="0 0 20 20" fill="none" stroke="#a9adb1" strokeWidth="2.400"><path d="M19 1l-7 7M12 1.500v6.500h7M1 19l7-7M1.500 12h6.500v7" /></svg>
            </ControlEnd>
          </Controls>
          <LectureTitle><Fit w={549} size={24.500} color="#d6dde8" family={"Inter, Roboto, sans-serif"}>5. Deploying Hello World App in TomCat Server</Fit></LectureTitle>
          <Skip $side="left"><svg width="12" height="16" viewBox="0 0 12 16"><path d="M9 1L2 8l7 7" fill="none" stroke="#fff" strokeWidth="2.500" /></svg></Skip>
          <Skip $side="right"><svg width="10" height="16" viewBox="0 0 10 16"><path d="M2 1l7 7-7 7" fill="none" stroke="#fff" strokeWidth="2.500" /></svg></Skip>
          <Progress><Span $w={615} $c="rgba(164,53,240,.78)" /><Span $w={156} $c="rgba(160,160,160,.35)" /><Span $w={469} $c="rgba(225,225,225,.6)" /></Progress>
        </Player>
      </Page>

      <TaskBar>
        <StartArea>
          <WinLogo /><Mag s={34} c="#000" t={2.800} /><TaskView />
        </StartArea>
        {apps.map(([ic, w, st], i) => <AppTile key={i} $w={w} $state={st}>{ic}</AppTile>)}
        <Scroller><Chev d={UP} c="#555" s={12} t={2} /><Chev d={DOWN} c="#555" s={12} t={2} /></Scroller>
        <Weather>
          <svg width="25" height="34" viewBox="0 0 25 34"><path d="M4 20V5q0-4 4-4t4 4v15q5 3 4 8-2 6-8 6t-8-6q0-5 4-8z" fill="#7cc4f8" stroke="#6a7a8a" strokeWidth=".6" /><circle cx="8" cy="27" r="4.500" fill="#1489dc" /><path d="M6.500 8h3v16h-3z" fill="#f2476a" /><path d="M22 9v18M19 23l3 4 3-4" fill="none" stroke="#2e62e8" strokeWidth="2.600" /></svg>
          <Fit w={53} size={19.500} color="#111">Tem...</Fit>
        </Weather>
        <Tray>
          <svg width="18" height="10" viewBox="0 0 18 10"><path d="M1 9.500L9 1l8 8.500" fill="none" stroke="#000" strokeWidth="1.400" /></svg>
          <svg width="18" height="22" viewBox="0 0 18 22" fill="none" stroke="#111" strokeWidth="1.300"><rect x="4" y="5" width="9" height="12" rx="2" /><path d="M13 10l4-3v8l-4-3M4 2q5-3 10 0M4 20q5 3 10 0" /></svg>
          <svg width="25" height="18" viewBox="0 0 25 18"><path d="M6 17Q0 16 1 11.500T6 6.500Q8 0 14 1t6 6q5 1 4.500 5.500T19 17z" fill="#8e8e8e" stroke="#222" strokeWidth="1.300" /><path d="M6 17Q1 15 4 11l8-2 11 6q-2 2-4 2z" fill="#f2f2f2" /></svg>
          <svg width="16" height="24" viewBox="0 0 16 24"><rect x="3" y="0" width="10" height="18" rx="1" fill="#000" /><path d="M1 11v5q0 4 4 4h6q4 0 4-4v-5M8 20v3M4 23.500h8" fill="none" stroke="#000" strokeWidth="1.200" /></svg>
          <svg width="25" height="24" viewBox="0 0 25 24"><path d="M1 4l22-4v19L1 22z" fill="none" stroke="#111" strokeWidth="1.200" /><path d="M8 11q1-4 6-4l2 2M16 5v4h-4M16 12q-1 5-6 4l-2-2M8 18v-4h4" fill="none" stroke="#111" strokeWidth="1.300" /><circle cx="18.500" cy="18" r="5.500" fill="#2b6fb8" /></svg>
          <Battery s={25} />
          <svg width="20" height="20" viewBox="0 0 20 20" fill="none" stroke="#333" strokeWidth="1.400"><path d="M1 19Q3 3 19 1M6 19Q7 8 19 6M11 19q1-6 8-8" /><circle cx="17" cy="17" r="1.500" fill="#000" /></svg>
          <Speaker s={24} />
          <Fit w={34} size={18} color="#111">ENG</Fit>
        </Tray>
        <Clock><Fit w={45} size={18.500} color="#111">22:50</Fit><Fit w={94} size={18.500} color="#111">06-08-2023</Fit></Clock>
        <Notice>
          <svg width="37" height="37" viewBox="0 0 37 37"><path d="M0 1h24v20H13l-3 5-3-5H0z" fill="#000" /><path d="M5 6.500h14M5 11h14M5 15.500h10" stroke="#ddd" strokeWidth="1.400" /><circle cx="24" cy="25" r="12" fill="#d8d8da" stroke="#555" /><text x="24" y="31.500" textAnchor="middle" fontSize="18" fontWeight="600" fontFamily="Open Sans, sans-serif" fill="#111">1</text></svg>
        </Notice>
        <Sliver />
      </TaskBar>
    </>
  );
}
